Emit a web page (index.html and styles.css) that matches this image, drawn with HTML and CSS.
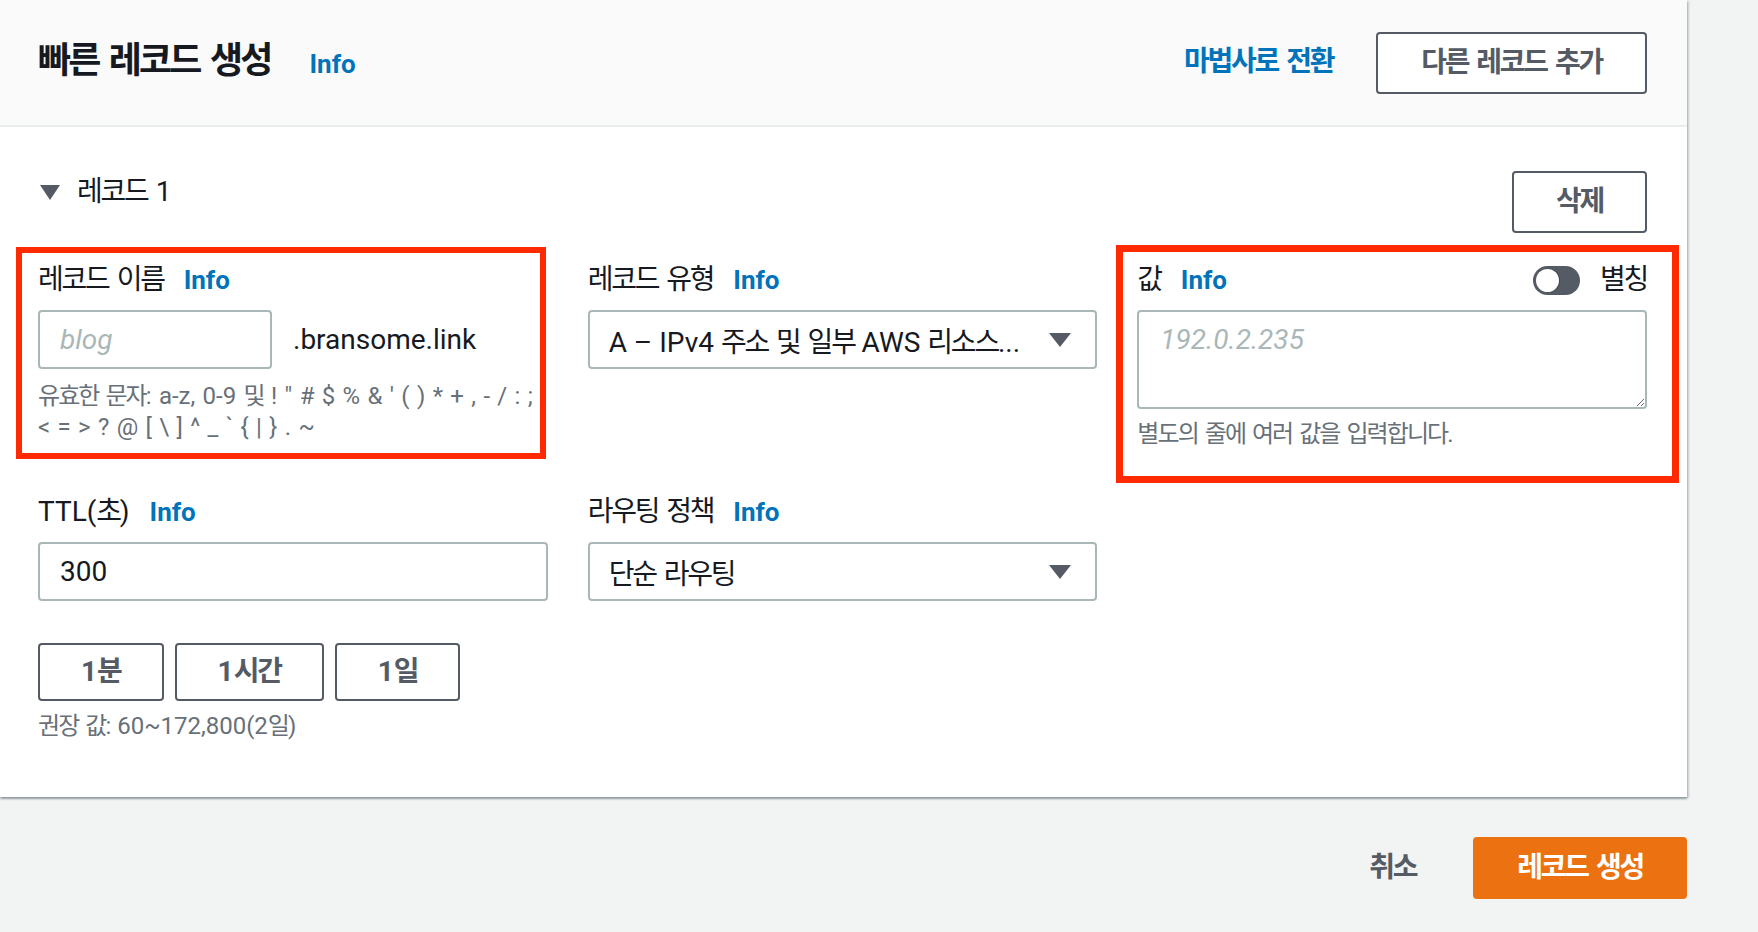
FILE: index.html
```html
<!DOCTYPE html>
<html lang="ko">
<head>
<meta charset="utf-8">
<title>빠른 레코드 생성</title>
<link rel="stylesheet" href="styles.css">
</head>
<body>
<div class="card">
  <div class="card-header">
    <div class="title-group">
      <h2 class="title k">빠른 레코드 생성</h2>
      <a class="info info-title">Info</a>
    </div>
    <div class="header-actions">
      <a class="link k">마법사로 전환</a>
      <button class="btn btn-add k">다른 레코드 추가</button>
    </div>
  </div>

  <div class="card-body">
    <div class="record-head">
      <div class="expander"><span class="tri-down"></span><span class="k">레코드 1</span></div>
      <button class="btn btn-del k">삭제</button>
    </div>

    <div class="fields">
      <div class="field">
        <div class="label-row"><span class="label k">레코드 이름</span><a class="info">Info</a></div>
        <div class="name-row">
          <input class="input input-name" placeholder="blog">
          <span class="suffix">.bransome.link</span>
        </div>
        <div class="desc desc-chars"><span class="k">유효한 문자</span>: a-z, 0-9 <span class="k">및</span> ! " # $ % &amp; ' ( ) * + , - / : ;<br>&lt; = &gt; ? @ [ \ ] ^ _ ` { | } . ~</div>
        <div class="mark mark-1"></div>
      </div>

      <div class="field">
        <div class="label-row"><span class="label k">레코드 유형</span><a class="info">Info</a></div>
        <div class="select">
          <span class="select-text">A – IPv4 <span class="k">주소 및 일부</span> AWS <span class="k">리소스</span>...</span>
          <span class="caret"></span>
        </div>
      </div>

      <div class="field">
        <div class="label-row split">
          <div class="label-left"><span class="label k">값</span><a class="info">Info</a></div>
          <div class="label-right">
            <span class="toggle"><span class="knob"></span></span>
            <span class="label k">별칭</span>
          </div>
        </div>
        <textarea class="textarea" placeholder="192.0.2.235"></textarea>
        <div class="desc desc-value k">별도의 줄에 여러 값을 입력합니다.</div>
        <div class="mark mark-2"></div>
      </div>

      <div class="field">
        <div class="label-row"><span class="label">TTL(<span class="k">초</span>)</span><a class="info">Info</a></div>
        <input class="input input-full" value="300">
        <div class="ttl-buttons">
          <button class="btn btn-ttl">1<span class="k">분</span></button>
          <button class="btn btn-ttl">1<span class="k">시간</span></button>
          <button class="btn btn-ttl">1<span class="k">일</span></button>
        </div>
        <div class="desc hint"><span class="k">권장 값</span>: 60~172,800(2<span class="k">일</span>)</div>
      </div>

      <div class="field">
        <div class="label-row"><span class="label k">라우팅 정책</span><a class="info">Info</a></div>
        <div class="select">
          <span class="select-text k">단순 라우팅</span>
          <span class="caret"></span>
        </div>
      </div>
    </div>
  </div>
</div>

<div class="footer">
  <button class="btn btn-link k">취소</button>
  <button class="btn btn-primary k">레코드 생성</button>
</div>
</body>
</html>
```

FILE: styles.css
```css
* {
  box-sizing: border-box;
}

html,
body {
  margin: 0;
  padding: 0;
}

body {
  width: 1758px;
  height: 932px;
  overflow: hidden;
  background: #f2f3f3;
  font-family: "Roboto", "Noto Sans CJK KR", sans-serif;
  font-size: 28px;
  color: #16191f;
}

.k {
  letter-spacing: -0.08em;
  word-spacing: 0.12em;
}

/* ---------- card ---------- */
.card {
  width: 1687px;
  background: #ffffff;
  box-shadow: 0 2px 2px 0 rgba(0, 28, 36, 0.35), 2px 1px 2px 0 rgba(0, 28, 36, 0.15);
}

.card-header {
  height: 127px;
  background: #fafafa;
  border-bottom: 2px solid #eaeded;
  display: flex;
  align-items: center;
  justify-content: space-between;
  padding: 0 40px 0 38px;
}

.title-group {
  display: flex;
  align-items: baseline;
  margin-bottom: 4px;
}

.title {
  margin: 0;
  font-size: 36px;
  font-weight: 700;
  line-height: 48px;
}

.info {
  color: #0073bb;
  font-weight: 700;
  font-size: 26px;
  text-decoration: none;
}

.info-title {
  margin-left: 39px;
}

.header-actions {
  display: flex;
  align-items: center;
  gap: 43px;
}

.link {
  color: #0073bb;
  font-weight: 700;
  font-size: 28px;
  margin-bottom: 8px;
}

/* ---------- buttons ---------- */
.btn {
  font-family: inherit;
  font-size: 28px;
  font-weight: 700;
  color: #545b64;
  background: #ffffff;
  border: 2px solid #545b64;
  border-radius: 4px;
  height: 62px;
  padding: 0 40px;
  line-height: 1;
  cursor: pointer;
}

.btn-add {
  padding: 0 43px;
}

.btn-del {
  padding: 0 42px;
}

.btn-ttl {
  height: 58px;
  padding: 0 41px;
}

.btn-link {
  background: transparent;
  border-color: transparent;
}

.btn-primary {
  background: #ec7211;
  border-color: #ec7211;
  color: #ffffff;
  padding: 0 42px;
}

/* ---------- body ---------- */
.card-body {
  padding: 44px 40px 55px 38px;
}

.record-head {
  display: flex;
  justify-content: space-between;
  align-items: flex-start;
}

.expander {
  display: flex;
  align-items: center;
  line-height: 42px;
  font-size: 28px;
}

.tri-down {
  width: 0;
  height: 0;
  margin: 0 17px 0 2px;
  border-left: 10px solid transparent;
  border-right: 10px solid transparent;
  border-top: 15px solid #545b64;
}

.fields {
  margin-top: 29px;
  display: grid;
  grid-template-columns: repeat(3, 1fr);
  column-gap: 40px;
  row-gap: 44px;
}

.field {
  position: relative;
}

.label-row {
  display: flex;
  align-items: center;
  gap: 20px;
  height: 36px;
  margin-bottom: 12px;
}

.label-row.split {
  justify-content: space-between;
}

.label-left,
.label-right {
  display: flex;
  align-items: center;
  gap: 20px;
}

.label {
  font-size: 28px;
  line-height: 36px;
}

.toggle {
  display: flex;
  align-items: center;
  width: 47px;
  height: 29px;
  padding: 3px;
  border-radius: 15px;
  background: #545b64;
}

.knob {
  width: 23px;
  height: 23px;
  border-radius: 50%;
  background: #ffffff;
  box-shadow: 1px 0 1px rgba(0, 0, 0, 0.25);
}

/* ---------- inputs ---------- */
.input {
  display: block;
  height: 59px;
  border: 2px solid #aab7b8;
  border-radius: 4px;
  padding: 0 20px;
  font-family: "Roboto", "Noto Sans CJK KR", sans-serif;
  font-size: 28px;
  color: #16191f;
  background: #ffffff;
  outline: none;
}

.input::placeholder,
.textarea::placeholder {
  color: #aab7b8;
  font-style: italic;
}

.name-row {
  display: flex;
  align-items: center;
  gap: 21px;
}

.input-name {
  width: 234px;
}

.input-full {
  width: 100%;
}

.suffix {
  font-size: 28px;
}

.select {
  height: 59px;
  border: 2px solid #aab7b8;
  border-radius: 4px;
  padding: 0 24px 0 19px;
  display: flex;
  align-items: center;
  justify-content: space-between;
  background: #ffffff;
}

.select-text {
  white-space: nowrap;
}

.caret {
  width: 0;
  height: 0;
  border-left: 11px solid transparent;
  border-right: 11px solid transparent;
  border-top: 14px solid #545b64;
}

.textarea {
  display: block;
  width: 100%;
  height: 99px;
  border: 2px solid #aab7b8;
  border-radius: 4px;
  padding: 12px 21px;
  font-family: "Roboto", "Noto Sans CJK KR", sans-serif;
  font-size: 28px;
  line-height: 32px;
  color: #16191f;
  background: #ffffff;
  outline: none;
}

.desc {
  margin-top: 12px;
  font-size: 24px;
  line-height: 31px;
  color: #687078;
  white-space: nowrap;
}

.desc-chars {
  word-spacing: 1.4px;
}

.desc-value {
  margin-top: 10px;
}

.ttl-buttons {
  display: flex;
  gap: 11px;
  margin-top: 42px;
}

.hint {
  margin-top: 10px;
}

/* ---------- annotation overlays ---------- */
.mark {
  position: absolute;
  border: 6px solid #ff2a00;
  pointer-events: none;
}

.mark-1 {
  left: -22px;
  top: -15px;
  width: 530px;
  height: 212px;
}

.mark-2 {
  left: -21px;
  top: -17px;
  width: 563px;
  height: 238px;
  border-width: 7px;
}

/* ---------- footer ---------- */
.footer {
  width: 1687px;
  display: flex;
  justify-content: flex-end;
  align-items: center;
  gap: 15px;
  margin-top: 40px;
}
```
